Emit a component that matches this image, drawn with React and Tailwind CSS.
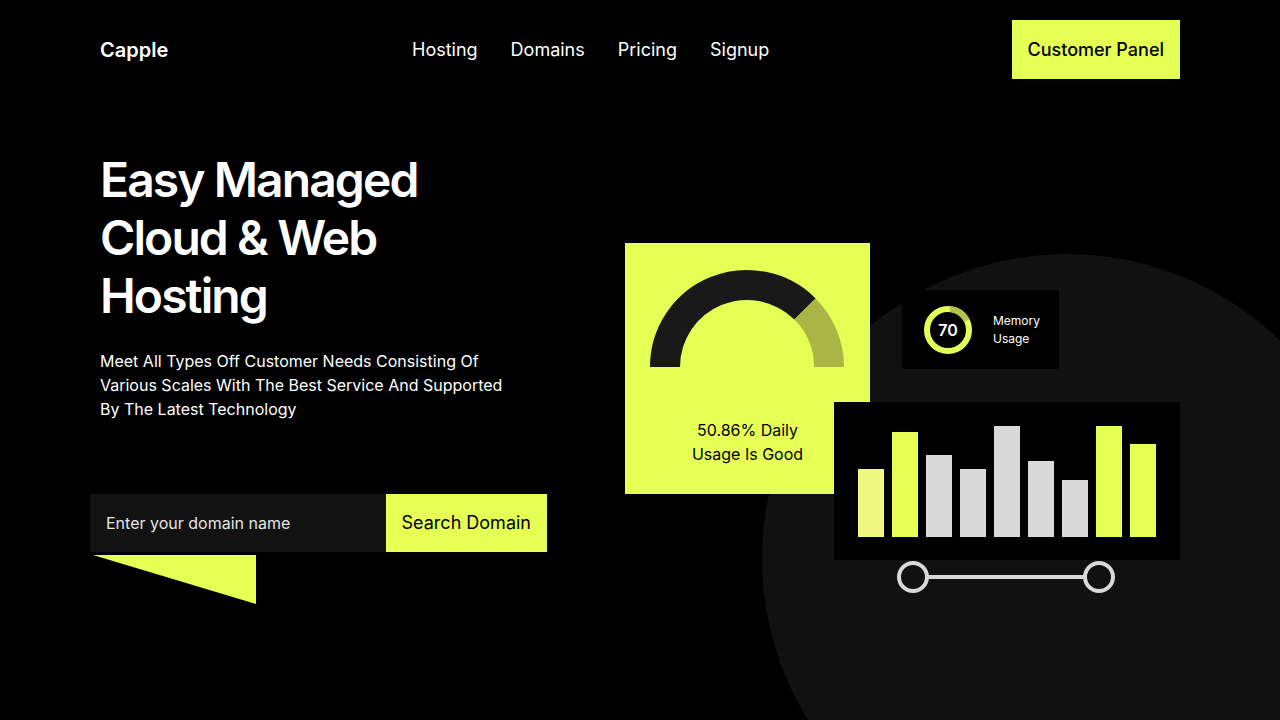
import { useState } from 'react'

const NAV = ['Hosting', 'Domains', 'Pricing', 'Signup']

const BARS = [
  { h: 68, c: 'bg-[#eff97f]' },
  { h: 105, c: 'bg-[#e6ff55]' },
  { h: 82, c: 'bg-[#d9d9d9]' },
  { h: 68, c: 'bg-[#d9d9d9]' },
  { h: 111, c: 'bg-[#d9d9d9]' },
  { h: 76, c: 'bg-[#d9d9d9]' },
  { h: 57, c: 'bg-[#d9d9d9]' },
  { h: 111, c: 'bg-[#e6ff55]' },
  { h: 93, c: 'bg-[#e6ff55]' },
]

function Gauge() {
  return (
    <svg width="245" height="175" viewBox="0 0 245 175">
      <path d="M40 124 A82 82 0 0 1 180 66" fill="none" stroke="#191919" strokeWidth="30" />
      <path d="M180 66 A82 82 0 0 1 204 124" fill="none" stroke="#a9b645" strokeWidth="30" />
    </svg>
  )
}

function Ring() {
  // circumference for r=21
  const c = 2 * Math.PI * 21
  return (
    <svg width="50" height="50" viewBox="0 0 50 50">
      <circle cx="25" cy="25" r="21" fill="none" stroke="#e6ff55" strokeWidth="6" />
      <circle
        cx="25" cy="25" r="21" fill="none" stroke="#b3c24a" strokeWidth="6"
        strokeDasharray={`${c * 0.16} ${c}`}
        transform="rotate(-85 25 25)"
      />
      <text x="25" y="30.5" textAnchor="middle" fill="#fff" fontSize="16" fontWeight="600" fontFamily="Inter">70</text>
    </svg>
  )
}

export default function App() {
  const [domain, setDomain] = useState('')

  return (
    <div className="relative w-full h-[720px] overflow-hidden bg-black text-white font-['Inter',sans-serif]">
      {/* backdrop circle */}
      <div className="absolute left-[762px] top-[254px] w-[610px] h-[610px] rounded-full bg-[#111111]" />

      <div className="relative mx-auto w-[1080px]">
        {/* Header */}
        <header className="flex items-center pt-5">
          <div className="text-xl font-semibold w-[312px]">Capple</div>
          <nav className="flex items-center gap-[33px] text-lg">
            {NAV.map(n => (
              <a key={n} href="#" className="hover:text-[#e6ff55]">{n}</a>
            ))}
          </nav>
          <button className="ml-auto h-[59px] px-4 bg-[#e6ff55] text-black text-lg font-medium">Customer Panel</button>
        </header>

        <div className="flex justify-between">
          {/* Left hero */}
          <div className="pt-[72px] w-[460px]">
            <h1 className="text-[48px] leading-[58px] font-semibold tracking-[-0.04em]">
              Easy Managed<br />Cloud &amp; Web<br />Hosting
            </h1>
            <p className="mt-[24px] text-base leading-6 text-white w-[410px]">
              Meet All Types Off Customer Needs Consisting Of Various Scales With The Best Service And Supported By The Latest Technology
            </p>

            <div className="mt-[73px] -ml-[10px]">
              <div className="flex h-[58px] w-[457px]">
                <input
                  value={domain}
                  onChange={e => setDomain(e.target.value)}
                  placeholder="Enter your domain name"
                  className="flex-1 min-w-0 bg-[#121212] px-4 text-base text-white placeholder:text-[#e5e5e5] outline-none"
                />
                <button className="px-4 bg-[#e6ff55] text-black text-lg">Search Domain</button>
              </div>
              <div className="ml-[3px] mt-[3px] w-[163px] h-[49px] bg-[#e6ff55] [clip-path:polygon(0_0,100%_0,100%_100%)]" />
            </div>
          </div>

          {/* Right dashboard */}
          <div className="relative mt-[164px] w-[555px] h-[360px]">
            <div className="absolute left-0 top-0 w-[245px] h-[251px] bg-[#e6ff55] text-black">
              <Gauge />
              <p className="text-center text-base leading-6">50.86% Daily<br />Usage Is Good</p>
            </div>

            <div className="absolute left-[277px] top-[47px] w-[157px] h-[79px] bg-black rounded-[3px] flex items-center pl-[21px] gap-[20px]">
              <Ring />
              <p className="text-xs leading-[18px]">Memory<br />Usage</p>
            </div>

            <div className="absolute left-[209px] top-[159px] w-[346px] h-[158px] bg-black flex items-end gap-2 pl-6 pb-[23px]">
              {BARS.map((b, i) => (
                <div key={i} className={`w-[26px] ${b.c}`} style={{ height: b.h }} />
              ))}
            </div>

            <svg className="absolute left-[272px] top-[318px]" width="220" height="34" viewBox="0 0 220 34">
              <line x1="30" y1="16" x2="188" y2="16" stroke="#d9d9d9" strokeWidth="4" />
              <circle cx="16" cy="16" r="14" fill="none" stroke="#d9d9d9" strokeWidth="4" />
              <circle cx="202" cy="16" r="14" fill="none" stroke="#d9d9d9" strokeWidth="4" />
            </svg>
          </div>
        </div>
      </div>
    </div>
  )
}
